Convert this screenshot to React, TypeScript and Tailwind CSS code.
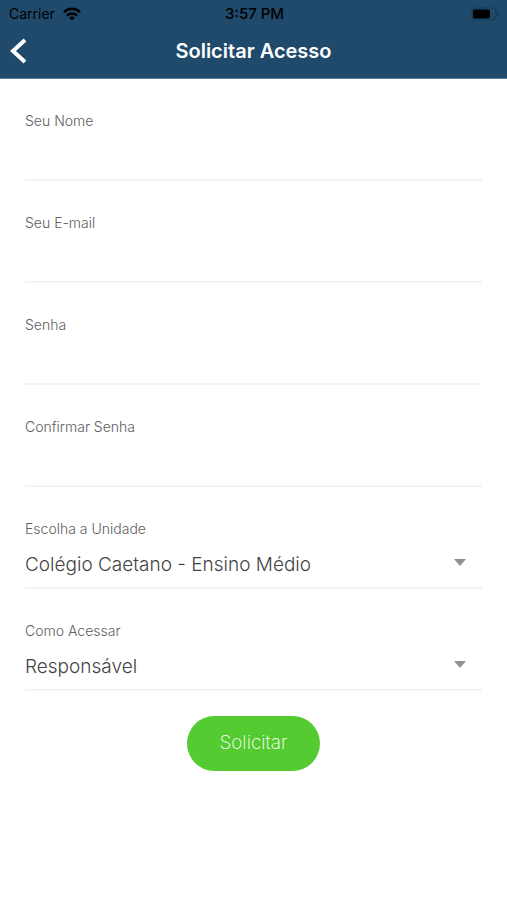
import { useState, type ReactNode } from "react";

const textFields = [
  { id: "nome", label: "Seu Nome", type: "text" },
  { id: "email", label: "Seu E-mail", type: "email" },
  { id: "senha", label: "Senha", type: "password" },
  { id: "confirmar", label: "Confirmar Senha", type: "password" },
];

const selectFields = [
  { id: "unidade", label: "Escolha a Unidade", options: ["Colégio Caetano - Ensino Médio"] },
  { id: "acesso", label: "Como Acessar", options: ["Responsável"] },
];

function StatusBar() {
  return (
    <div className="grid h-7 grid-cols-3 items-center pr-[7px] pl-[9px] text-sm text-black">
      <div className="flex items-center gap-2">
        <span>Carrier</span>
        <svg width="18" height="14" viewBox="0 0 18 14" fill="none" stroke="black" strokeWidth="2.5" aria-hidden="true">
          <path d="M1 5.2C5.5 .7 12.500 .7 17 5.200" />
          <path d="M4 8.500C6.800 5.700 11.200 5.700 14 8.500" />
          <path d="M6.200 10.700C7.800 9.100 10.200 9.100 11.800 10.700L9 13.500Z" fill="black" stroke="none" />
        </svg>
      </div>
      <span className="text-center text-[15px] font-medium">3:57 PM</span>
      <svg className="justify-self-end" width="29" height="14" viewBox="0 0 29 14" aria-hidden="true">
        <rect x="1" y="1" width="24" height="12" rx="3.500" fill="none" stroke="#173a57" strokeWidth="1.200" />
        <rect x="2" y="2.500" width="17" height="9" rx="2" fill="black" />
        <path d="M26.500 4.500C29 5.500 29 8.500 26.500 9.500Z" fill="#173a57" />
      </svg>
    </div>
  );
}

function Field({ id, label, children }: { id: string; label: string; children: ReactNode }) {
  return (
    <div className="flex h-[102px] flex-col border-b-2 border-[#f3f3f3] pt-8">
      <label htmlFor={id} className="text-sm font-light text-[#606060]">
        {label}
      </label>
      <div className="relative mt-2 flex">{children}</div>
    </div>
  );
}

export default function App() {
  const [values, setValues] = useState<Record<string, string>>({});
  const update = (id: string, value: string) => setValues((old) => ({ ...old, [id]: value }));
  const control = "h-9 w-full appearance-none bg-transparent text-[19px] font-light text-[#444444] outline-none";

  return (
    <div className="min-h-screen bg-white font-['Inter',sans-serif]">
      <header className="border-b border-[#5b7b95] bg-[#1f4a6c]">
        <StatusBar />
        <div className="grid h-[50px] grid-cols-[40px_1fr_40px] items-center pb-1">
          <button type="button" aria-label="Voltar" className="flex h-10 items-center pl-2">
            <svg width="20" height="28" viewBox="0 0 20 28" fill="none" stroke="white" strokeWidth="4" aria-hidden="true">
              <path d="M17 3L5 14L17 25" />
            </svg>
          </button>
          <h1 className="text-center text-xl font-semibold text-white">Solicitar Acesso</h1>
        </div>
      </header>
      <form className="px-[25px]" onSubmit={(e) => e.preventDefault()}>
        {textFields.map((f) => (
          <Field key={f.id} id={f.id} label={f.label}>
            <input id={f.id} type={f.type} value={values[f.id] ?? ""} onChange={(e) => update(f.id, e.target.value)} className={control} />
          </Field>
        ))}
        {selectFields.map((f) => (
          <Field key={f.id} id={f.id} label={f.label}>
            <select id={f.id} value={values[f.id] ?? f.options[0]} onChange={(e) => update(f.id, e.target.value)} className={control}>
              {f.options.map((o) => (
                <option key={o}>{o}</option>
              ))}
            </select>
            <svg className="pointer-events-none absolute top-3 right-4" width="12" height="7" viewBox="0 0 12 7" fill="#919191" aria-hidden="true">
              <path d="M0 0H12L6 7Z" />
            </svg>
          </Field>
        ))}
        <div className="flex justify-center py-[25px]">
          <button type="submit" className="h-[55px] rounded-full bg-[#53cb31] px-8 text-[19px] font-extralight text-white">
            Solicitar
          </button>
        </div>
      </form>
    </div>
  );
}
